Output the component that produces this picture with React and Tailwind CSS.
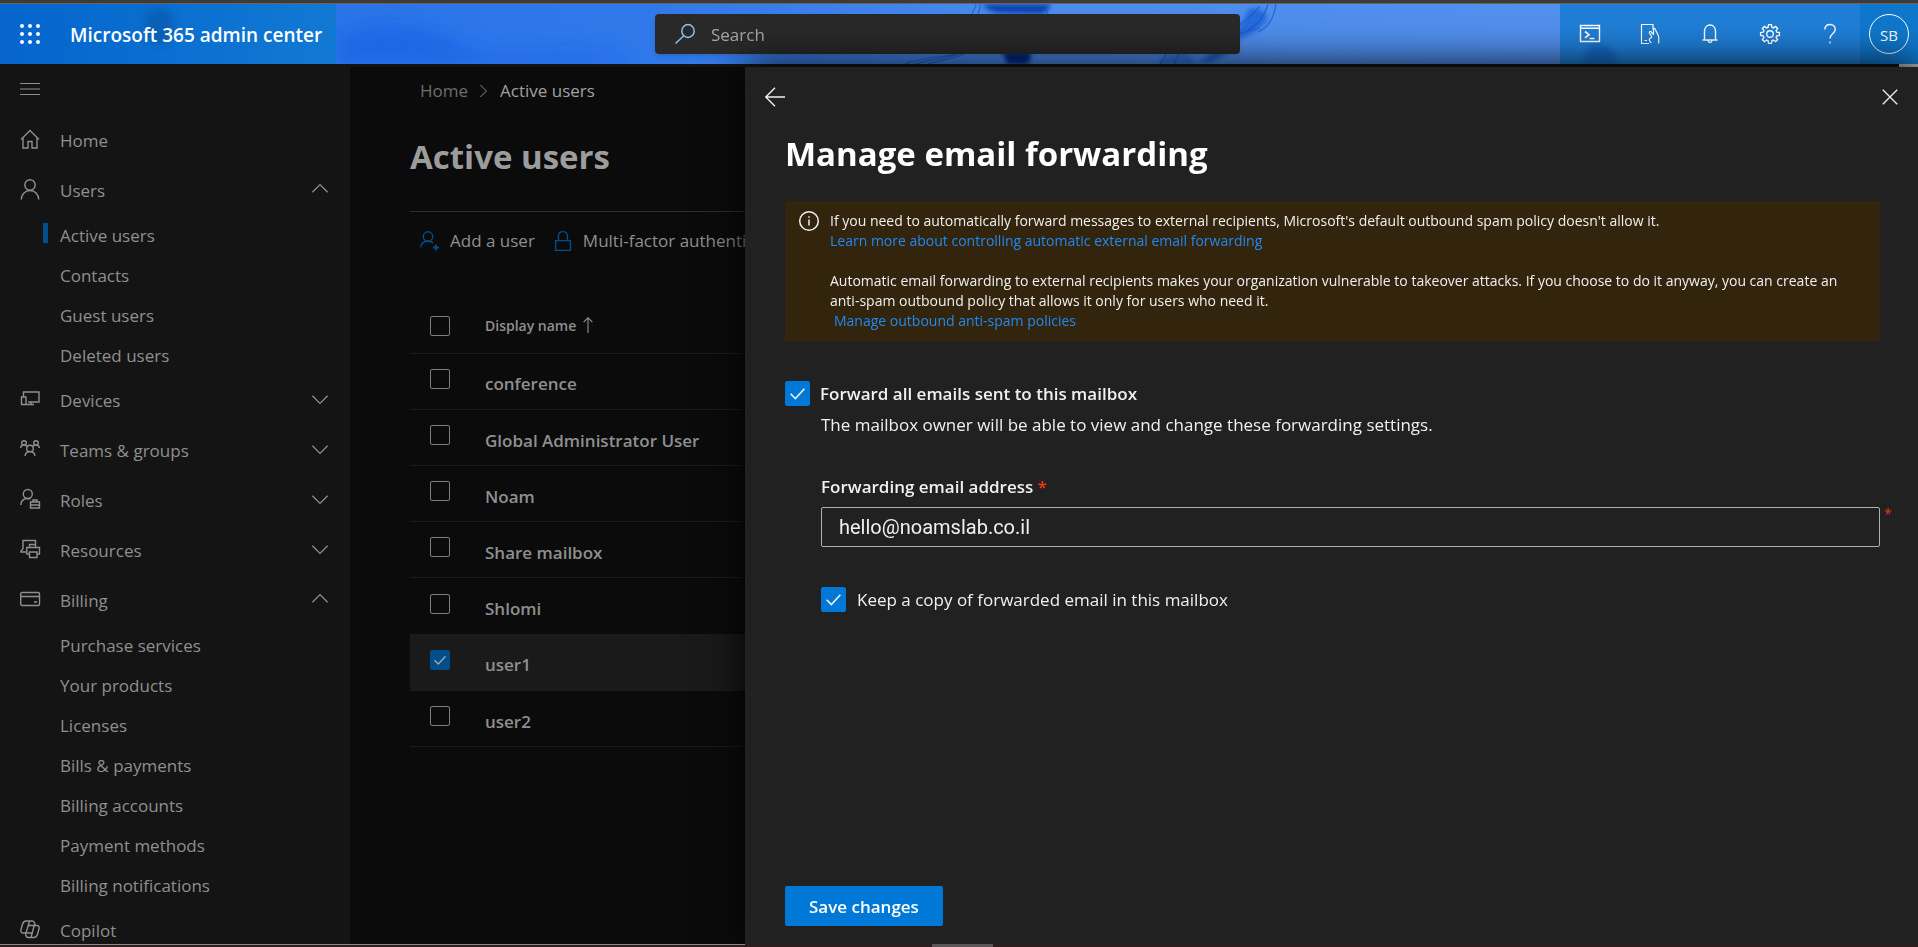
import clsx from 'clsx';

const iconPaths = {
  home: <path d="M1 10.5 10 1.5l9 9M3 8.8V19h5v-6.5h4V19h5V8.8" />,
  users: (
    <>
      <circle cx="10" cy="6" r="5.2" />
      <path d="M1.2 20.5c.4-5.2 4-9 8.8-9s8.400 3.800 8.800 9" />
    </>
  ),
  devices: (
    <>
      <path d="M3.500 8V3H19v10H8" />
      <path d="M1.500 8H6v7.500H1.500zM6 15.500h8M11 13v2.500" />
    </>
  ),
  teams: (
    <>
      <circle cx="10" cy="9.500" r="3.300" />
      <circle cx="4" cy="4" r="2.300" />
      <circle cx="16" cy="4" r="2.300" />
      <path d="M5 17c.3-2.800 2.200-4.500 5-4.500s4.700 1.700 5 4.500M.6 9c.2-1.900 1.500-3 3.400-3 1.200 0 2.200.5 2.900 1.400M19.400 9c-.2-1.900-1.500-3-3.400-3-1.200 0-2.200.5-2.900 1.400" />
    </>
  ),
  roles: (
    <>
      <circle cx="7.800" cy="5" r="4.500" />
      <path d="M.8 16c.3-3.900 3-6.500 7-6.500 1 0 1.900.2 2.700.5M10.500 13h9v6h-9zM13 13v-2h4v2M10.500 16h9M13.500 15.200v1.600M16.500 15.200v1.600" />
    </>
  ),
  resources: (
    <>
      <path d="M3 10V1.500h12.500V5M3 10l-2 2v1h5" />
      <path d="M9.500 8.500V5.500h6v3M9.500 15H6.800V8.500h12.700V15H17M9.500 13h7.500v5.500H9.500z" />
    </>
  ),
  billing: (
    <>
      <rect x=".7" y="3.500" width="18.800" height="13" rx="1.500" />
      <path d="M.7 7.500h18.800M14 13h3" />
    </>
  ),
  copilot: (
    <>
      <path d="M6 2h6.500c1.300 0 1.700.8 2 2l.6 2.200M6 2C3.800 2 3 3.500 2.500 5.200L1 10.500C.4 12.800 1.200 14 3.200 14h2.300" />
      <path d="M14 18.500H8c-1.300 0-1.800-.8-2.100-2l-.4-2.500M14 18.500c2.200 0 3-1.500 3.500-3.200L19 10c.6-2.300-.2-3.500-2.200-3.500h-2.300" />
      <path d="M9.500 2 6.500 12.500c-.3 1-.6 1.500-1.500 1.500M11 18.500 13.800 8c.3-1 .6-1.500 1.500-1.500M8 6.500h6M6.500 14H12" />
    </>
  ),
};

function Icon({ name, children, size = 20, className }) {
  return (
    <svg
      width={size}
      height={size}
      viewBox="0 0 20 20"
      fill="none"
      stroke="currentColor"
      strokeWidth="1.4"
      className={clsx('shrink-0 overflow-visible', className)}
      aria-hidden="true"
    >
      {name ? iconPaths[name] : children}
    </svg>
  );
}

const navItems = [
  { label: 'Home', icon: 'home' },
  {
    label: 'Users',
    icon: 'users',
    open: true,
    children: ['Active users', 'Contacts', 'Guest users', 'Deleted users'],
  },
  { label: 'Devices', icon: 'devices', open: false },
  { label: 'Teams & groups', icon: 'teams', open: false },
  { label: 'Roles', icon: 'roles', open: false },
  { label: 'Resources', icon: 'resources', open: false },
  {
    label: 'Billing',
    icon: 'billing',
    open: true,
    children: [
      'Purchase services',
      'Your products',
      'Licenses',
      'Bills & payments',
      'Billing accounts',
      'Payment methods',
      'Billing notifications',
    ],
  },
  { label: 'Copilot', icon: 'copilot' },
];

const users = [
  { name: 'conference' },
  { name: 'Global Administrator User' },
  { name: 'Noam' },
  { name: 'Share mailbox' },
  { name: 'Shlomi' },
  { name: 'user1', selected: true },
  { name: 'user2' },
];

const headerActions = [
  {
    label: 'Shell',
    icon: (
      <>
        <path d="M.5 1.500h19v16H.5zM.5 4.200h19" />
        <path d="m5 7.500 4 3.200-4 3.200M9.500 14.500h5" strokeWidth="1.700" />
      </>
    ),
  },
  {
    label: 'Mobile app',
    icon: (
      <path
        d="M9 19.500H1.500V.5h11.500v5M4.500 16.500h2.500M13.500 11V5.200c0-1 1.500-1 1.700 0l3 6c.4.900.5 1.600.5 2.600v5.700M13.500 10.500l-2.500-2.700c-.9-.8-2.200.3-1.500 1.300l2.300 3.400c.5 1-2 1.500-2.500 3-.3 1.400 1 2 2 3.500"
        strokeWidth="1.200"
      />
    ),
  },
  {
    label: 'Notifications',
    icon: (
      <path d="M2.500 16h15M4.500 16V7.500C4.500 3.800 6.800 1 10 1s5.500 2.800 5.500 6.500V16M8 16.500c.2 1.300 1 2 2 2s1.800-.7 2-2" />
    ),
  },
  {
    label: 'Settings',
    icon: (
      <>
        <circle cx="10" cy="10" r="3.300" />
        <path d="M8.600.6h2.800l.5 2.600 1.500.7 2.200-1.500 2 2-1.500 2.200.7 1.500 2.600.5v2.800l-2.600.5-.7 1.500 1.500 2.200-2 2-2.200-1.500-1.500.7-.5 2.600H8.600l-.5-2.600-1.500-.7-2.200 1.500-2-2 1.500-2.200-.7-1.500-2.600-.5V8.600l2.600-.5.7-1.500-1.500-2.200 2-2 2.200 1.500 1.500-.7z" />
      </>
    ),
  },
  {
    label: 'Help',
    icon: (
      <path d="M4.800 5.500C5 2.400 7 .5 10 .5s5.200 2 5.200 4.900c0 4.200-5.200 4.600-5.200 9M10 17.500v2" />
    ),
  },
];

function Tick({ className, boxClassName, tickClassName, ...props }) {
  return (
    <span className={clsx('inline-grid shrink-0', className)}>
      <input
        type="checkbox"
        className={clsx('peer col-start-1 row-start-1 size-full appearance-none rounded-xs', boxClassName)}
        {...props}
      />
      <svg
        viewBox="0 0 20 20"
        fill="none"
        stroke="currentColor"
        strokeWidth="1.300"
        className={clsx('pointer-events-none invisible col-start-1 row-start-1 size-full peer-checked:visible', tickClassName)}
        aria-hidden="true"
      >
        <path d="m4.500 10.200 3.800 3.800 7.200-7.800" />
      </svg>
    </span>
  );
}

function HeaderArt() {
  return (
    <svg
      viewBox="0 0 1918 60"
      preserveAspectRatio="none"
      className="absolute inset-0 size-full"
      aria-hidden="true"
    >
      <defs>
        <linearGradient id="sky" x1="0" x2="1">
          <stop offset="0.170" stopColor="#2a74e8" />
          <stop offset="0.340" stopColor="#3079ea" />
          <stop offset="0.550" stopColor="#4d8cec" />
          <stop offset="0.800" stopColor="#5290ee" />
        </linearGradient>
        <filter id="soft" x="-20%" y="-40%" width="140%" height="180%">
          <feGaussianBlur stdDeviation="2" />
        </filter>
        <filter id="haze" x="-20%" y="-80%" width="140%" height="260%">
          <feGaussianBlur stdDeviation="10" />
        </filter>
      </defs>
      <rect width="1918" height="60" fill="url(#sky)" />
      <path
        d="M336 36c40-24 90-14 130 6s110-10 170 18H336z"
        fill="#1562e4"
        opacity=".7"
        filter="url(#haze)"
      />
      <g filter="url(#soft)">
        <path d="M984 0c0 5 8 8 16 9l42 1c6-3 8-6 8-10z" fill="#0a46b0" />
        <path d="M1002 48c2 6 6 8 4 12h22c2-4 4-8 2-12z" fill="#062c86" />
        <path d="M1240 22c8-10 4-14 12-18 14 2 16 6 14 14-8 8-18 16-32 18z" fill="#1c62d8" opacity=".8" />
        <path d="M1238 36c-4 8-14 16-26 22h-14l20-12z" fill="#1257cc" opacity=".8" />
        <path d="M1158 60c2-8 12-10 30-10l8 10z" fill="#2466d8" opacity=".6" />
      </g>
      <g fill="none" stroke="#1556cc" strokeWidth="1.200" opacity=".7">
        <path d="M905 60c20-8 38-6 60-12M915 60c20-6 34-6 52-12M928 60c18-6 26-4 40-12M972 12c0-6 4-8 4-12M978 10c2-4 2-6 2-10M1046 6l2 6" />
        <path d="M1276 0c-2 14-8 24-18 28M1268 0c-4 14-12 22-20 26M1260 2c-6 8-14 14-22 20M1238 30l22-6M1160 60l6-10M1174 60l6-12" />
      </g>
    </svg>
  );
}

function Header() {
  return (
    <header className="relative flex h-[60px] shrink-0 items-center text-white">
      <HeaderArt />
      <div className="relative flex h-full w-[336px] shrink-0 items-center bg-linear-to-r from-[#0565cd] to-[#1179d4] pl-5">
        <div className="absolute top-1 left-[145px] h-9 w-7 rounded-full bg-[#0a4f9c]/50 blur-[4px]" />
        <button aria-label="App launcher" className="relative mr-[30px]">
          <svg width="20" height="20" viewBox="0 0 20 20" fill="currentColor" aria-hidden="true">
            {[2, 10, 18].map((y) =>
              [2, 10, 18].map((x) => <circle key={x + '-' + y} cx={x} cy={y} r="2" />)
            )}
          </svg>
        </button>
        <a href="#home" className="relative pt-0.5 text-[19px] font-semibold whitespace-nowrap">
          Microsoft 365 admin center
        </a>
      </div>
      <div className="relative flex flex-1 pr-[320px] pl-[319px]">
        <label className="flex h-10 flex-1 items-center gap-4 rounded bg-[#292929] px-5 shadow-md">
          <Icon className="text-[#8fc3f0]">
            <ellipse cx="13" cy="7" rx="6.200" ry="6.500" />
            <path d="M8.500 12 .5 19.500" />
          </Icon>
          <input
            type="search"
            aria-label="Search"
            placeholder="Search"
            className="min-w-0 flex-1 bg-transparent pt-0.5 text-[17px] outline-none placeholder:text-[#a6a6a6]"
          />
        </label>
      </div>
      <div className="relative flex h-full shrink-0 bg-[#1f7fd8]">
        <div className="absolute bottom-0 left-6 h-5 w-8 rounded-t-full bg-[#0b5fbe]/60 blur-[3px]" />
        {headerActions.map((action) => (
          <button key={action.label} aria-label={action.label} className="relative grid w-[60px] place-items-center">
            <Icon>{action.icon}</Icon>
          </button>
        ))}
        <button aria-label="Account" className="grid w-[58px] place-items-center bg-[#0f78cd]">
          <span className="grid size-10 place-items-center rounded-full border border-white pt-0.5 text-[15px]">
            SB
          </span>
        </button>
      </div>
    </header>
  );
}

function Sidebar() {
  return (
    <nav className="w-[350px] shrink-0 overflow-hidden bg-[#141414] text-[17px] text-[#8f8f8f]">
      <button aria-label="Collapse navigation" className="flex h-12 w-full items-center pb-1 pl-5">
        <Icon>
          <path d="M0 4.500h20M0 10h20M0 15.500h20" strokeWidth="1.200" />
        </Icon>
      </button>
      {navItems.map((item) => (
        <div key={item.label}>
          <button className="flex h-[50px] w-full items-center gap-5 pr-[22px] pl-5">
            <Icon name={item.icon} className="mb-0.5" />
            <span className="flex-1 pt-0.5 text-left">{item.label}</span>
            {item.open !== undefined && (
              <Icon size={16} className="mb-0.5">
                <path d={item.open ? 'M.5 14 10 4.500l9.500 9.500' : 'M.5 6 10 15.500 19.500 6'} strokeWidth="1.600" />
              </Icon>
            )}
          </button>
          {item.children && (
            <ul>
              {item.children.map((child) => (
                <li key={child} className="flex h-10 items-center">
                  <span
                    className={clsx('mb-1 ml-[43px] h-5 w-[5px]', child === 'Active users' && 'bg-[#004e8c]')}
                  />
                  <a href="#nav" className="ml-3 pt-0.5">
                    {child}
                  </a>
                </li>
              ))}
            </ul>
          )}
        </div>
      ))}
    </nav>
  );
}

function ActiveUsers() {
  return (
    <main className="w-[395px] shrink-0 overflow-hidden bg-[#0b0b0b] pl-[60px] text-[17px] text-[#8f8f8f]">
      <div className="flex h-12 items-center gap-[10px] pl-[10px]">
        <a href="#home" className="text-[#6e6e6e]">
          Home
        </a>
        <Icon size={12}>
          <path d="m4 0 10 10L4 20" strokeWidth="1.600" />
        </Icon>
        <span className="text-[#a0a0a0]">Active users</span>
      </div>
      <h1 className="flex h-[97px] items-center border-b border-[#2f2f2f] pb-3 text-[33px] font-bold text-[#9c9c9c]">
        Active users
      </h1>
      <div className="flex h-[58px] items-center gap-[18px] pl-[10px] whitespace-nowrap">
        <button className="flex items-center gap-[10px]">
          <Icon className="text-[#004e8c]">
            <circle cx="8" cy="5.500" r="4.700" />
            <path d="M.7 16.500c.3-4 3.200-6.300 7.300-6.300 2.200 0 4 .7 5.200 1.900" />
            <path d="M16 13.500v6M13 16.500h6" strokeWidth="1.800" />
          </Icon>
          Add a user
        </button>
        <button className="flex items-center gap-[10px]">
          <Icon className="text-[#004e8c]">
            <path d="M2.600 9.600h14.800v9.800H2.600zM5.500 9.600V5C5.500 2.400 7.400.6 10 .6S14.500 2.400 14.500 5v4.600" />
          </Icon>
          Multi-factor authentication
        </button>
      </div>
      <table className="mt-7 h-[449px] w-[600px] table-fixed border-collapse text-left">
        <thead>
          <tr className="h-[55px] border-b border-[#1b1b1b]">
            <th className="w-[75px] pb-0.5 pl-5">
              <Tick aria-label="Select all users" className="size-5 align-middle" boxClassName="border border-[#7d7d7d]" />
            </th>
            <th className="text-[14px] font-semibold">
              <button className="flex items-center gap-2">
                Display name
                <Icon size={16} className="-ml-1">
                  <path d="M10 20V1M4.500 6.500 10 1l5.500 5.500" />
                </Icon>
              </button>
            </th>
          </tr>
        </thead>
        <tbody>
          {users.map((user) => (
            <tr
              key={user.name}
              className={clsx('h-[56px] border-b border-[#1b1b1b]', user.selected && 'bg-[#1a1a1a]')}
            >
              <td className="pb-2 pl-5">
                <Tick
                  aria-label={'Select ' + user.name}
                  defaultChecked={user.selected}
                  className="size-5 align-middle"
                  boxClassName="border border-[#7d7d7d] checked:border-[#004e8c] checked:bg-[#004e8c]"
                  tickClassName="text-[#a8a8a8]"
                />
              </td>
              <td className="pt-[6px] font-semibold">{user.name}</td>
            </tr>
          ))}
        </tbody>
      </table>
    </main>
  );
}

function ForwardingPanel() {
  return (
    <aside className="relative flex min-w-0 flex-1 flex-col bg-[#212121] pr-[38px] pl-10 text-[17px] text-[#f0f0f0] shadow-[0_0_40px_#000]">
      <div className="-mx-5 flex h-[60px] items-center justify-between">
        <button aria-label="Back">
          <Icon>
            <path d="M20 10H1M10 .8.8 10l9.200 9.200" />
          </Icon>
        </button>
        <button aria-label="Close" className="mr-0.5">
          <Icon size={16}>
            <path d="m1 1 18 18M19 1 1 19" strokeWidth="1.600" />
          </Icon>
        </button>
      </div>
      <h2 className="pt-1 text-[33px] leading-[46px] font-bold text-white">Manage email forwarding</h2>
      <div className="mt-6 flex gap-[11px] bg-[#33240d] px-[14px] py-[10px] text-[14px] leading-5">
        <Icon>
          <circle cx="10" cy="10" r="9.300" strokeWidth="1.500" />
          <path d="M10 8.500v6M10 5.300v1.500" strokeWidth="1.500" />
        </Icon>
        <div>
          <p>
            If you need to automatically forward messages to external recipients, Microsoft's default outbound spam
            policy doesn't allow it.
          </p>
          <a href="#learn" className="text-[#2189f0]">
            Learn more about controlling automatic external email forwarding
          </a>
          <p className="mt-5">
            Automatic email forwarding to external recipients makes your organization vulnerable to takeover attacks. If
            you choose to do it anyway, you can create an anti-spam outbound policy that allows it only for users who
            need it.
          </p>
          <a href="#policies" className="ml-1 text-[#2189f0]">
            Manage outbound anti-spam policies
          </a>
        </div>
      </div>

      <label className="mt-10 flex items-center gap-[10px] font-semibold">
        <Tick defaultChecked className="size-[25px]" boxClassName="border border-[#a0a0a0] checked:border-[#0078d7] checked:bg-[#0078d7]" />
        Forward all emails sent to this mailbox
      </label>
      <div className="pl-9">
        <p className="mt-[6px] leading-6">
          The mailbox owner will be able to view and change these forwarding settings.
        </p>
        <label htmlFor="address" className="mt-[38px] block leading-6 font-semibold">
          Forwarding email address <span className="text-[#f03a17]">*</span>
        </label>
        <div className="relative mt-2">
          <input
            id="address"
            type="email"
            required
            defaultValue="hello@noamslab.co.il"
            className="h-10 w-full rounded-xs border border-[#b0b0b0] bg-transparent px-[17px] font-[Roboto,sans-serif] text-[20px] outline-none"
          />
          <span className="absolute top-0 -right-3 text-[14px] leading-none text-[#f03a17]">*</span>
        </div>
        <label className="mt-10 flex items-center gap-[11px]">
          <Tick defaultChecked className="size-[25px]" boxClassName="border border-[#a0a0a0] checked:border-[#0078d7] checked:bg-[#0078d7]" />
          Keep a copy of forwarded email in this mailbox
        </label>
      </div>
      <button className="mt-auto mb-[18px] h-10 self-start rounded-xs bg-[#0078d7] px-6 pt-0.5 font-semibold text-white">
        Save changes
      </button>
    </aside>
  );
}

export default function App() {
  return (
    <div className="flex h-screen flex-col overflow-hidden bg-[#0b0b0b] font-['Segoe_UI','Open_Sans',sans-serif]">
      <div className="h-1 shrink-0 border-b border-[#6b6259] bg-[#3b3b3b]" />
      <Header />
      <div className="relative flex h-[3px] shrink-0 justify-end bg-[#141414]">
        <div className="w-[19px] bg-[#b5b5b5]" />
      </div>
      <div className="flex min-h-0 flex-1">
        <Sidebar />
        <ActiveUsers />
        <ForwardingPanel />
      </div>
      <div className="relative flex h-[3px] shrink-0 bg-[#2b1d20]">
        <div className="h-px w-[745px] bg-[#8a8a8a]" />
        <div className="ml-[187px] h-full w-[61px] bg-[#5b5557]" />
      </div>
    </div>
  );
}
